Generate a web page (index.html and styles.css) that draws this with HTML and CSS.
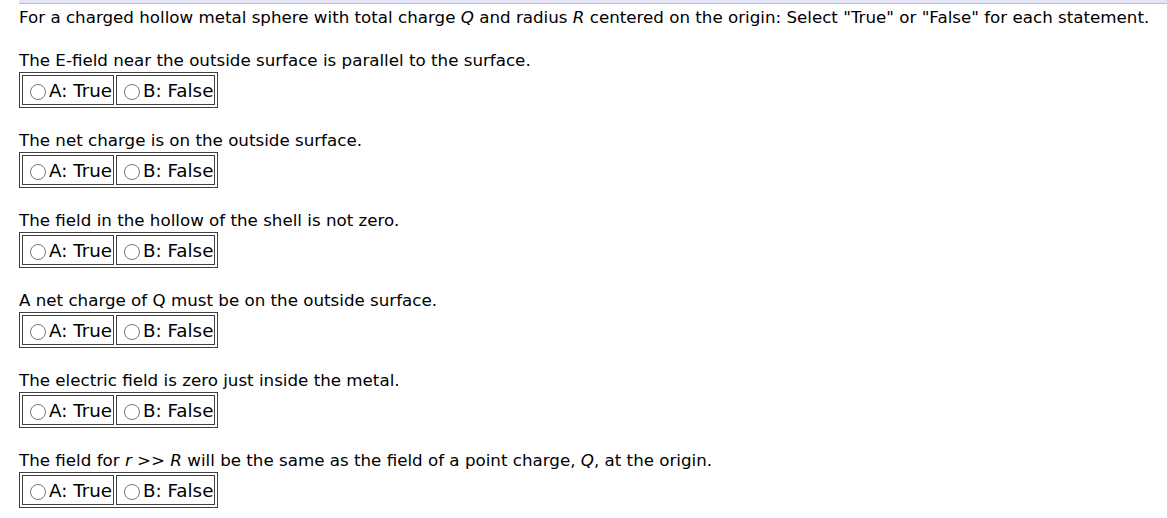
FILE: index.html
```html
<!DOCTYPE html>
<html>
<head>
<meta charset="utf-8">
<link rel="stylesheet" href="styles.css">
</head>
<body>
<div class="wrap">
  <div class="topbar"></div>
  <p class="intro">For a charged hollow metal sphere with total charge <i>Q</i> and radius <i>R</i> centered on the origin: Select "True" or "False" for each statement.</p>

  <div class="item">
    <div class="stmt">The E-field near the outside surface is parallel to the surface.</div>
    <table class="choices"><tr>
      <td><label><input type="radio" name="q1">A: True</label></td>
      <td><label><input type="radio" name="q1">B: False</label></td>
    </tr></table>
  </div>

  <div class="item">
    <div class="stmt">The net charge is on the outside surface.</div>
    <table class="choices"><tr>
      <td><label><input type="radio" name="q2">A: True</label></td>
      <td><label><input type="radio" name="q2">B: False</label></td>
    </tr></table>
  </div>

  <div class="item">
    <div class="stmt">The field in the hollow of the shell is not zero.</div>
    <table class="choices"><tr>
      <td><label><input type="radio" name="q3">A: True</label></td>
      <td><label><input type="radio" name="q3">B: False</label></td>
    </tr></table>
  </div>

  <div class="item">
    <div class="stmt">A net charge of Q must be on the outside surface.</div>
    <table class="choices"><tr>
      <td><label><input type="radio" name="q4">A: True</label></td>
      <td><label><input type="radio" name="q4">B: False</label></td>
    </tr></table>
  </div>

  <div class="item">
    <div class="stmt">The electric field is zero just inside the metal.</div>
    <table class="choices"><tr>
      <td><label><input type="radio" name="q5">A: True</label></td>
      <td><label><input type="radio" name="q5">B: False</label></td>
    </tr></table>
  </div>

  <div class="item">
    <div class="stmt">The field for <i>r</i> &gt;&gt; <i>R</i> will be the same as the field of a point charge, <i>Q</i>, at the origin.</div>
    <table class="choices"><tr>
      <td><label><input type="radio" name="q6">A: True</label></td>
      <td><label><input type="radio" name="q6">B: False</label></td>
    </tr></table>
  </div>
</div>
</body>
</html>
```

FILE: styles.css
```css
html, body {
  margin: 0;
  padding: 0;
  background: #ffffff;
}
body {
  font-family: "DejaVu Sans", Verdana, sans-serif;
  font-size: 16.7px;
  color: #000000;
}
.wrap {
  margin-left: 19px;
}
.topbar {
  height: 3px;
  background: #e4e4f7;
  border-bottom: 1px solid #c0c0c0;
}
.intro {
  margin: 3px 0 0 0;
  line-height: 20px;
}
.item {
  margin-top: 23px;
}
.item + .item {
  margin-top: 22px;
}
.stmt {
  line-height: 20px;
}
.choices {
  border: 1px solid #404040;
  border-spacing: 2px;
  margin-top: 2px;
}
.choices td {
  border: 1px solid #404040;
  padding: 2px 1px 0 1px;
  height: 26px;
  line-height: 26px;
  font-size: 18.3px;
  white-space: nowrap;
}
.choices label {
  display: flex;
  align-items: center;
}
.choices input {
  width: 16px;
  height: 16px;
  margin: 2px 3px 0 6px;
}
```
